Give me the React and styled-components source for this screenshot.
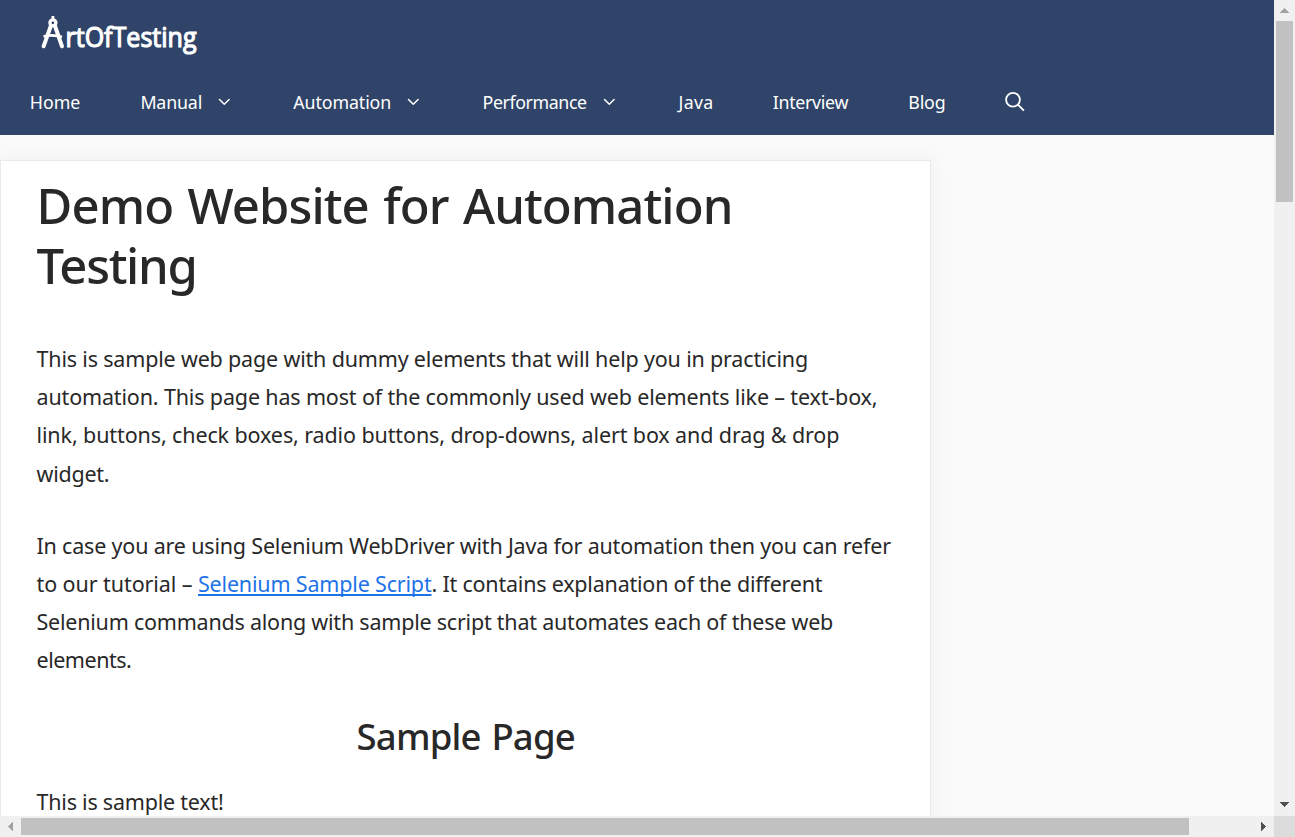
import React from "react";
import styled, { createGlobalStyle } from "styled-components";

const GlobalStyle = createGlobalStyle`
  * { box-sizing: border-box; }
  html, body { margin: 0; height: 100%; overflow: hidden; }
  body { font-family: "Noto Sans", "Open Sans", sans-serif; background: #fafafa; color: #282828; }
`;

const Window = styled.div`
  display: grid;
  grid-template-columns: 1fr 21px;
  grid-template-rows: 1fr 21px;
  width: 1295px;
  height: 837px;
`;

const Viewport = styled.div`
  min-width: 0;
  min-height: 0;
  overflow: hidden;
  background: #fafafa;
`;

const Header = styled.header`
  height: 135px;
  background: #2f4468;
  color: #fff;
`;

const Branding = styled.div`
  height: 69px;
  padding: 12px 0 0 40px;
`;

const LogoSvg = styled.svg`
  display: block;
  overflow: visible;
`;

const Nav = styled.nav`
  display: flex;
  height: 66px;
  padding-left: 29.8px;
`;

const NavItem = styled.a`
  display: flex;
  align-items: center;
  width: ${(p) => p.$width}px;
  flex: none;
  height: 66px;
  font-size: 17.8px;
  letter-spacing: ${(p) => p.$tracking || 0}px;
  white-space: nowrap;
  color: #fff;
`;

const NavLabel = styled.span`
  flex: none;
  width: ${(p) => (p.$width ? `${p.$width}px` : "auto")};
`;

const Card = styled.main`
  width: 931px;
  height: 900px;
  margin-top: 25px;
  padding: 14px 35px 0 35.5px;
  background: #fff;
  border: 1px solid #e8eaed;
  box-shadow: 0 0 20px rgba(23, 43, 99, 0.05);
`;

const Title = styled.h1`
  margin: 0 0 45px;
  font-size: 49px;
  line-height: 60px;
  font-weight: 500;
  word-spacing: 2.5px;
`;

const Subtitle = styled.h2`
  margin: 0 0 24px;
  font-size: 36.5px;
  line-height: 45px;
  font-weight: 500;
  text-align: center;
  word-spacing: 2px;
`;

const Paragraph = styled.p`
  margin: 0 0 34px;
  font-size: 21.5px;
  line-height: 38.2px;
`;

const Line = styled.span`
  display: block;
  white-space: nowrap;
  letter-spacing: ${(p) => p.$tracking}px;
`;

const Run = styled.span`
  letter-spacing: ${(p) => p.$tracking}px;
`;

const TextLink = styled.a`
  color: #1e73e8;
  letter-spacing: -0.177px;
  text-decoration: underline;
  text-decoration-thickness: 2px;
  text-underline-offset: 2px;
  text-decoration-skip-ink: none;
`;

const VerticalBar = styled.div`
  display: flex;
  flex-direction: column;
  align-items: center;
  background: #f0f0f0;
`;

const HorizontalBar = styled.div`
  display: flex;
  align-items: center;
  background: #f0f0f0;
`;

const Corner = styled.div`
  background: #dcdcdc;
`;

const ArrowButton = styled.div`
  display: grid;
  place-items: center;
  flex: none;
  width: 21px;
  height: ${(p) => p.$height}px;
  color: ${(p) => (p.$active ? "#505050" : "#a3a3a3")};
`;

const Thumb = styled.div`
  flex: none;
  width: ${(p) => p.$width}px;
  height: ${(p) => p.$height}px;
  background: #c1c1c1;
`;

const Spacer = styled.div`
  flex: 1;
`;

const arrowPoints = {
  up: "0,5 4.5,0 9,5",
  down: "0,0 9,0 4.5,5",
  left: "5,0 5,9 0,4.5",
  right: "0,0 5,4.5 0,9",
};

function ScrollArrow({ direction, active }) {
  const vertical = direction === "up" || direction === "down";
  return (
    <ArrowButton $active={active} $height={direction === "down" ? 24 : 21}>
      <svg width={vertical ? 9 : 5} height={vertical ? 5 : 9} shapeRendering="crispEdges">
        <polygon points={arrowPoints[direction]} fill="currentColor" />
      </svg>
    </ArrowButton>
  );
}

function Chevron() {
  return (
    <svg width="12" height="8" viewBox="0 0 12 8" fill="none" stroke="#fff" strokeWidth="1.5" strokeLinecap="round" strokeLinejoin="round">
      <path d="M1.500 1.500 6.300 6.300 11.100 1.500" />
    </svg>
  );
}

function SearchIcon() {
  return (
    <svg width="20" height="20" viewBox="0 0 20 20" fill="none" stroke="#fff" strokeWidth="1.8">
      <circle cx="8" cy="7.8" r="6.9" />
      <path d="M12.900 12.700 18.900 18.700" />
    </svg>
  );
}

function Logo() {
  return (
    <LogoSvg width="160" height="44" viewBox="40 12 160 44" fill="none" stroke="#fff">
      <path d="M52.9 16v4" strokeWidth="2.8" />
      <circle cx="52.9" cy="22.8" r="3" strokeWidth="3.3" />
      <path d="M50.800 26 43.600 46.300M55 26 62 46.300" strokeWidth="4" strokeLinecap="round" />
      <path d="M43.500 36.500Q52.800 34 62 37" strokeWidth="2.800" />
      <text x="65.500" y="47.200" fill="#fff" stroke="#fff" strokeWidth="1.200" fontFamily="Open Sans, sans-serif" fontSize="27.500" textLength="131" lengthAdjust="spacingAndGlyphs">
        rtOfTesting
      </text>
    </LogoSvg>
  );
}

const menu = [
  { label: "Home", width: 110.6, tracking: -0.05 },
  { label: "Manual", width: 152.9, labelWidth: 77.2, tracking: -0.15 },
  { label: "Automation", width: 189.3, labelWidth: 114, tracking: -0.1 },
  { label: "Performance", width: 196, labelWidth: 120, tracking: -0.4 },
  { label: "Java", width: 94.2, tracking: 0.3 },
  { label: "Interview", width: 135.5, tracking: -0.3 },
  { label: "Blog", width: 96.5, tracking: -0.15 },
];

export default function App() {
  return (
    <>
      <GlobalStyle />
      <Window>
        <Viewport>
          <Header>
            <Branding>
              <Logo />
            </Branding>
            <Nav>
              {menu.map((m) => (
                <NavItem key={m.label} $width={m.width} $tracking={m.tracking}>
                  <NavLabel $width={m.labelWidth}>{m.label}</NavLabel>
                  {m.labelWidth && <Chevron />}
                </NavItem>
              ))}
              <NavItem $width={20}>
                <SearchIcon />
              </NavItem>
            </Nav>
          </Header>
          <Card>
            <Title>
              <Line $tracking={-0.9}>Demo Website for Automation</Line>
              <Line $tracking={-1.3}>Testing</Line>
            </Title>
            <Paragraph>
              <Line $tracking={-0.175}>This is sample web page with dummy elements that will help you in practicing</Line>
              <Line $tracking={-0.152}>automation. This page has most of the commonly used web elements like – text-box,</Line>
              <Line $tracking={-0.112}>link, buttons, check boxes, radio buttons, drop-downs, alert box and drag &amp; drop</Line>
              <Line $tracking={-0.25}>widget.</Line>
            </Paragraph>
            <Paragraph>
              <Line $tracking={-0.185}>In case you are using Selenium WebDriver with Java for automation then you can refer</Line>
              <Line $tracking={-0.08}>
                to our tutorial – <TextLink>Selenium Sample Script</TextLink>
                <Run $tracking={-0.21}>. It contains explanation of the different</Run>
              </Line>
              <Line $tracking={-0.22}>Selenium commands along with sample script that automates each of these web</Line>
              <Line $tracking={-0.48}>elements.</Line>
            </Paragraph>
            <Subtitle>
              <Line $tracking={-0.8}>Sample Page</Line>
            </Subtitle>
            <Paragraph>
              <Line $tracking={-0.22}>This is sample text!</Line>
            </Paragraph>
          </Card>
        </Viewport>
        <VerticalBar>
          <ScrollArrow direction="up" />
          <Thumb $width={17} $height={181} />
          <Spacer />
          <ScrollArrow direction="down" active />
        </VerticalBar>
        <HorizontalBar>
          <ScrollArrow direction="left" />
          <Thumb $width={1168} $height={17} />
          <Spacer />
          <ScrollArrow direction="right" active />
        </HorizontalBar>
        <Corner />
      </Window>
    </>
  );
}
